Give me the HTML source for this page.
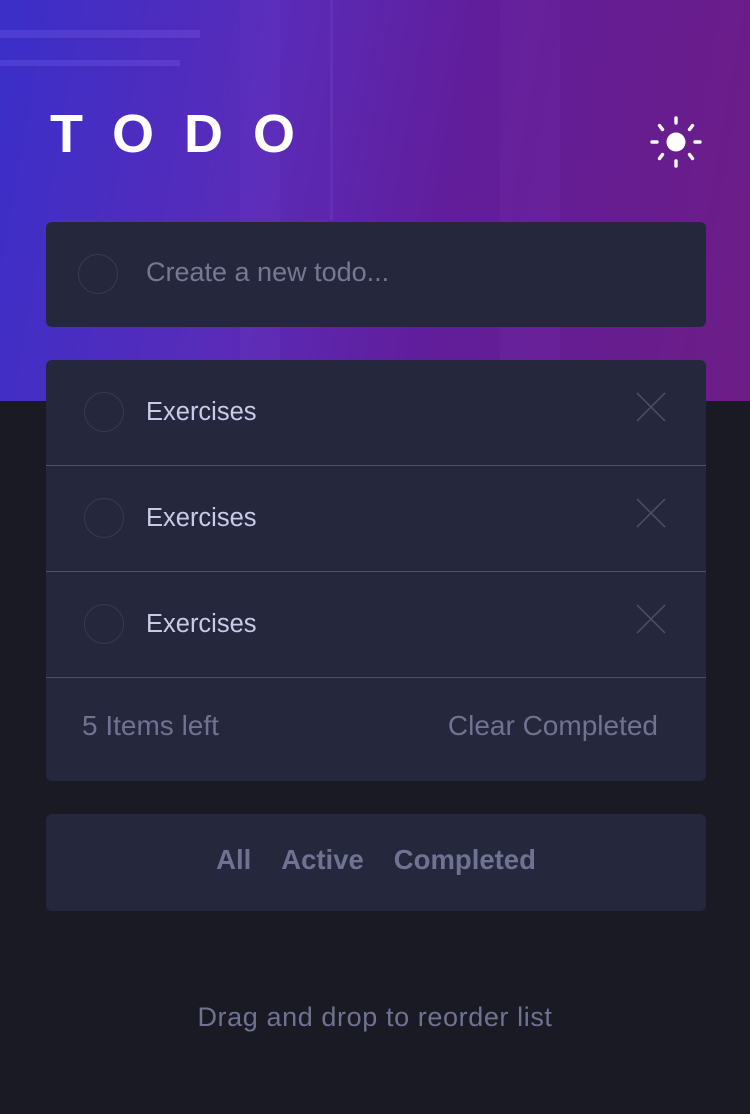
<!DOCTYPE html>
<html><head><meta charset="utf-8"><style>
*{margin:0;padding:0;box-sizing:border-box}
body{width:750px;height:1114px;background:#191a24;font-family:"Liberation Sans",sans-serif;position:relative;overflow:hidden}
.hdr{position:absolute;left:0;top:0;width:750px;height:401px;background:linear-gradient(100deg,#3a2fc9 0%,#5a2bb8 35%,#611d9a 60%,#6d1d86 100%);overflow:hidden}
.hdr .l{position:absolute;background:rgba(160,130,255,.18)}
h1{position:absolute;left:50px;top:106px;color:#fff;font-size:54px;font-weight:bold;letter-spacing:30px;line-height:56px}
.card{position:absolute;left:46px;width:660px;background:#25273c;border-radius:6px}
.row{height:106px;position:relative;border-bottom:1px solid #4d5067}
.circ{position:absolute;width:40px;height:40px;border:1px solid #393a4f;border-radius:50%}
.txt{position:absolute;left:100px;font-size:25.5px;color:#c8cbe7;white-space:nowrap}
.x{position:absolute;right:40px;top:32px}
.ft{font-size:28px;color:#6f7290;top:350px}
</style></head><body>
<div class="hdr">
<div class="l" style="left:0;top:30px;width:200px;height:8px"></div>
<div class="l" style="left:0;top:60px;width:180px;height:6px"></div>
<div class="l" style="left:330px;top:0;width:3px;height:220px;opacity:.6"></div>
<div class="l" style="left:240px;top:0;width:40px;height:401px;opacity:.25"></div>
<div class="l" style="left:500px;top:0;width:60px;height:401px;opacity:.25"></div>
</div>
<h1>TODO</h1>
<svg style="position:absolute;left:648px;top:114px" width="56" height="56" viewBox="0 0 56 56">
<circle cx="28" cy="28" r="9.5" fill="#fff"/>
<g stroke="#fff" stroke-width="3.4" stroke-linecap="round">
<line x1="28" y1="4" x2="28" y2="9"/><line x1="28" y1="47" x2="28" y2="52"/>
<line x1="4" y1="28" x2="9" y2="28"/><line x1="47" y1="28" x2="52" y2="28"/>
<line x1="11.5" y1="11.5" x2="14.5" y2="15.5"/><line x1="44.5" y1="11.5" x2="41.5" y2="15.5"/>
<line x1="11.5" y1="44.5" x2="14.5" y2="40.5"/><line x1="44.5" y1="44.5" x2="41.5" y2="40.5"/>
</g></svg>
<div class="card" style="top:222px;height:105px">
<div class="circ" style="left:32px;top:32px"></div>
<div class="txt" style="top:35px;color:#767992;font-size:27px">Create a new todo...</div>
</div>
<div class="card" style="top:360px;height:421px">
<div class="row"><div class="circ" style="left:38px;top:32px"></div><div class="txt" style="top:38px">Exercises</div>
<svg class="x" width="30" height="30"><path d="M1 1L29 29M29 1L1 29" stroke="#4d5067" stroke-width="1.5"/></svg></div>
<div class="row"><div class="circ" style="left:38px;top:32px"></div><div class="txt" style="top:38px">Exercises</div>
<svg class="x" width="30" height="30"><path d="M1 1L29 29M29 1L1 29" stroke="#4d5067" stroke-width="1.5"/></svg></div>
<div class="row"><div class="circ" style="left:38px;top:32px"></div><div class="txt" style="top:38px">Exercises</div>
<svg class="x" width="30" height="30"><path d="M1 1L29 29M29 1L1 29" stroke="#4d5067" stroke-width="1.5"/></svg></div>
<div class="txt ft" style="left:36px">5 Items left</div>
<div class="txt ft" style="left:auto;right:48px">Clear Completed</div>
</div>
<div class="card" style="top:814px;height:97px;text-align:center;padding-top:30px;font-size:27.5px;font-weight:bold;color:#6f7290">
<span>All</span><span style="margin-left:30px">Active</span><span style="margin-left:30px">Completed</span>
</div>
<div style="position:absolute;left:0;width:750px;top:1002px;text-align:center;font-size:27px;letter-spacing:.6px;color:#6f7290">Drag and drop to reorder list</div>
</body></html>
